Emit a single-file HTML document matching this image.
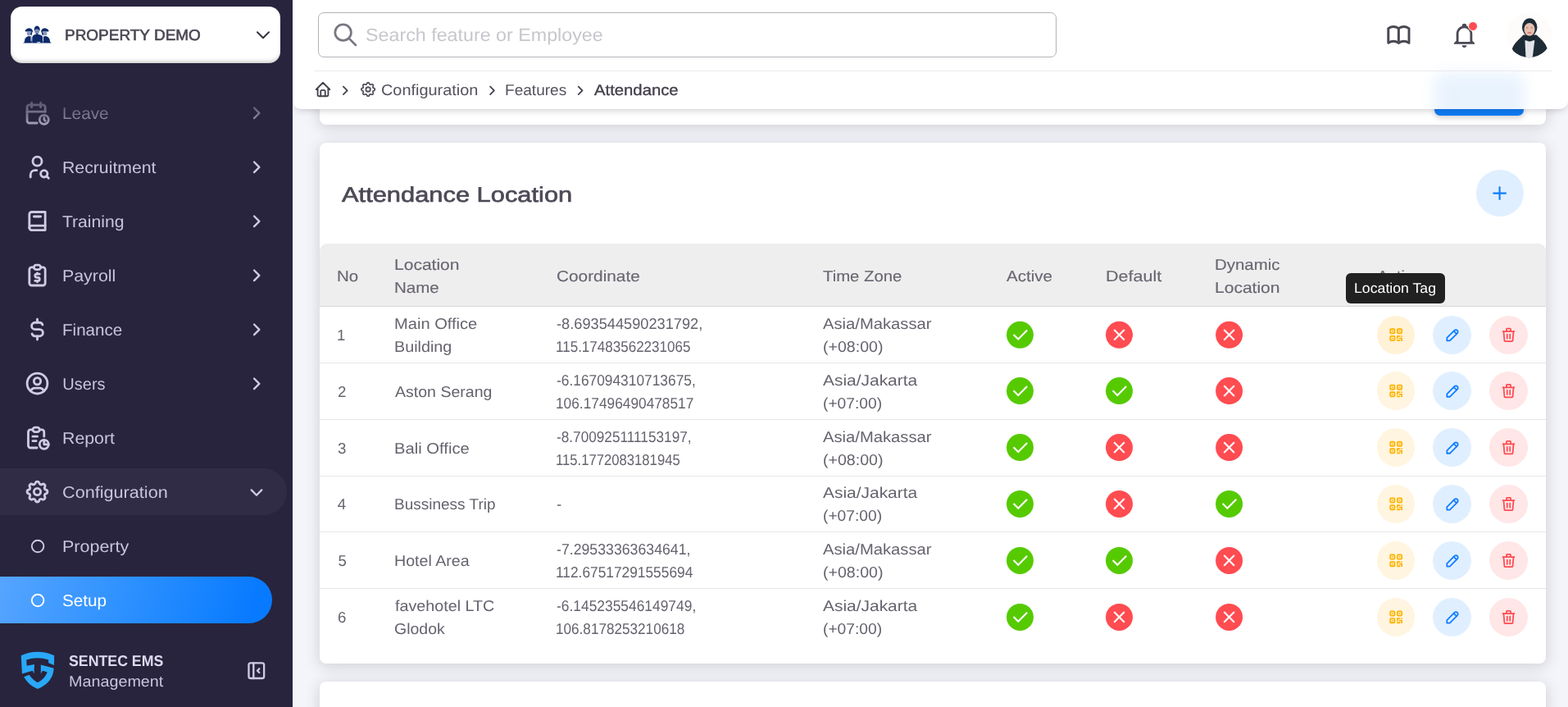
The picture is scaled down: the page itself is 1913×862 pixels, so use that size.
<!DOCTYPE html>
<html lang="en">
<head>
<meta charset="utf-8">
<title>Attendance - Configuration</title>
<style>

*{box-sizing:border-box;margin:0;padding:0}
html,body{width:1913px;height:862px}
body{position:relative;background:#f4f5fa;font-family:"Liberation Sans",sans-serif;-webkit-font-smoothing:antialiased}
#app{position:absolute;left:0;top:0;width:1913px;height:862px;overflow:hidden;will-change:transform}
.abs,.t,.ic{position:absolute}
.g{position:static;display:block;margin:0;padding:0;border:0;list-style:none;font:inherit;width:0;height:0}
.t{white-space:pre;display:block;transform-origin:0 0;text-rendering:geometricPrecision}
.ic{display:block;overflow:visible}
#sidebar{position:absolute;left:0;top:0;width:357px;height:862px;background:#28243d;overflow:hidden}
#prop{position:absolute;left:13px;top:8px;width:329px;height:68.5px;border-radius:14px;background:#fff;box-shadow:inset 0 -5px 5px -3px rgba(0,0,0,.22)}
#fade{position:absolute;left:0;top:86px;width:357px;height:84px;background:linear-gradient(#28243d 5%,rgba(40,36,61,.85) 30%,rgba(40,36,61,.5) 65%,rgba(40,36,61,.3) 75%,rgba(40,36,61,0));pointer-events:none}
#cfg{position:absolute;left:0;top:571px;width:349.5px;height:57px;border-radius:0 29px 29px 0;background:#302c45}
#setup{position:absolute;left:0;top:703px;width:332px;height:57px;border-radius:0 29px 29px 0;background:linear-gradient(-72.47deg,#087aff 8%,#2a8fff 50%,#56a5ff 100%)}
#main{position:absolute;left:357px;top:0;width:1556px;height:862px;overflow:hidden}
.card{position:absolute;left:33px;width:1496px;background:#fff;border-radius:8px;box-shadow:0 3px 17px 1px rgba(58,53,65,.19)}
#topbar{position:absolute;left:357px;top:0;width:1556px;height:133px;background:#fff;border-radius:0 0 10px 10px;box-shadow:0 4px 8px -3px rgba(58,53,65,.27);overflow:hidden}
#glow{position:absolute;left:1393px;top:89px;width:109px;height:60px;background:#0d79f2;opacity:.09;filter:blur(9px);border-radius:8px}
#search{position:absolute;left:31px;top:15px;width:901px;height:55px;border:1px solid #b4b2b9;border-radius:7px}
#divider{position:absolute;left:26px;top:86px;width:1510px;height:1px;background:#eaeaed}
#thead{position:absolute;left:0;top:123px;width:1496px;height:76.5px;background:#eee;border-radius:9px 9px 0 0;border-bottom:1px solid #d9d9dc}
.rl{position:absolute;left:0;width:1496px;height:1px;background:#e6e6e9}
.cb{position:absolute;width:47px;height:47px;border-radius:50%}
#tip{position:absolute;left:1642px;top:333px;width:121px;height:37px;border-radius:6px;background:#212121}

</style>
</head>
<body>
<div id="app">
<main id="main">
<div class="card" style="top:-40px;height:192px"></div>
<div class="abs btn-primary" style="left:1393px;top:87px;width:109px;height:54px;border-radius:7px;background:#0a7bf4;box-shadow:0 3px 6px rgba(58,53,65,.22)"></div>
<section class="card" style="top:174px;height:635px">
<div id="thead"></div>
<div class="rl" style="top:268px"></div>
<div class="rl" style="top:337px"></div>
<div class="rl" style="top:406px"></div>
<div class="rl" style="top:474px"></div>
<div class="rl" style="top:543px"></div>
</section>
<div class="card" style="top:831px;height:120px"></div>
</main>
<section class="g" aria-label="Attendance Location">
<h2 class="g"><span class="t" style="left:417.20px;top:222px;font-size:25.7px;line-height:33px;color:#4d4956;letter-spacing:0.000px;-webkit-text-stroke:0.65px #4d4956;transform:scaleX(1.2005);">Attendance Location</span></h2>
<div class="g" role="button" aria-label="Add location">
<div class="cb" style="left:1801px;top:207px;width:58px;height:57px;background:#e0efff"></div>
<svg class="ic" style="left:1817px;top:223px;width:27px;height:27px;" viewBox="0 0 27 27"><g transform="translate(0.00 0.00) scale(1.0500)" fill="none" stroke="#0d7cff" stroke-width="2" stroke-linecap="round" stroke-linejoin="round"><path d="M12 5l0 14"/><path d="M5 12l14 0"/></g></svg>
</div>
<div class="g" role="table">
<div class="g" role="row">
<div class="g" role="columnheader"><span class="t" style="left:411.10px;top:325px;font-size:18.667px;line-height:24px;color:#6a6671;letter-spacing:0.000px;-webkit-text-stroke:0.15px #6a6671;transform:scaleX(1.0965);">No</span></div>
<div class="g" role="columnheader"><span class="t" style="left:480.96px;top:311px;font-size:18.667px;line-height:24px;color:#6a6671;letter-spacing:0.000px;-webkit-text-stroke:0.15px #6a6671;transform:scaleX(1.1269);">Location</span> <span class="t" style="left:481.00px;top:339px;font-size:18.667px;line-height:24px;color:#6a6671;letter-spacing:0.000px;-webkit-text-stroke:0.15px #6a6671;transform:scaleX(1.0990);">Name</span></div>
<div class="g" role="columnheader"><span class="t" style="left:678.92px;top:325px;font-size:18.667px;line-height:24px;color:#6a6671;letter-spacing:0.000px;-webkit-text-stroke:0.15px #6a6671;transform:scaleX(1.1153);">Coordinate</span></div>
<div class="g" role="columnheader"><span class="t" style="left:1004.18px;top:325px;font-size:18.667px;line-height:24px;color:#6a6671;letter-spacing:0.000px;-webkit-text-stroke:0.15px #6a6671;transform:scaleX(1.0898);">Time Zone</span></div>
<div class="g" role="columnheader"><span class="t" style="left:1228.20px;top:325px;font-size:18.667px;line-height:24px;color:#6a6671;letter-spacing:0.000px;-webkit-text-stroke:0.15px #6a6671;transform:scaleX(1.0998);">Active</span></div>
<div class="g" role="columnheader"><span class="t" style="left:1348.52px;top:325px;font-size:18.667px;line-height:24px;color:#6a6671;letter-spacing:0.000px;-webkit-text-stroke:0.15px #6a6671;transform:scaleX(1.1529);">Default</span></div>
<div class="g" role="columnheader"><span class="t" style="left:1482.10px;top:311px;font-size:18.667px;line-height:24px;color:#6a6671;letter-spacing:0.000px;-webkit-text-stroke:0.15px #6a6671;transform:scaleX(1.0942);">Dynamic</span> <span class="t" style="left:1482.06px;top:339px;font-size:18.667px;line-height:24px;color:#6a6671;letter-spacing:0.000px;-webkit-text-stroke:0.15px #6a6671;transform:scaleX(1.1269);">Location</span></div>
<div class="g" role="columnheader"><span class="t" style="left:1679.90px;top:325px;font-size:18.667px;line-height:24px;color:#6a6671;letter-spacing:0.000px;-webkit-text-stroke:0.15px #6a6671;transform:scaleX(1.0965);">Action</span></div>
</div>
<div class="g" role="row">
<div class="g" role="cell"><span class="t" style="left:411.05px;top:397px;font-size:18.667px;line-height:24px;color:#66626d;letter-spacing:0.000px;">1</span></div>
<div class="g" role="cell"><span class="t" style="left:481.20px;top:383px;font-size:18.667px;line-height:24px;color:#66626d;letter-spacing:0.000px;transform:scaleX(1.0771);">Main Office</span> <span class="t" style="left:481.22px;top:411px;font-size:18.667px;line-height:24px;color:#66626d;letter-spacing:0.000px;transform:scaleX(1.0581);">Building</span></div>
<div class="g" role="cell"><span class="t" style="left:679.13px;top:383px;font-size:18.667px;line-height:24px;color:#66626d;letter-spacing:0.000px;transform:scaleX(0.9765);">-8.693544590231792,</span> <span class="t" style="left:678.05px;top:411px;font-size:18.667px;line-height:24px;color:#66626d;letter-spacing:0.000px;transform:scaleX(0.9126);">115.17483562231065</span></div>
<div class="g" role="cell"><span class="t" style="left:1004.30px;top:383px;font-size:18.667px;line-height:24px;color:#66626d;letter-spacing:0.000px;transform:scaleX(1.0828);">Asia/Makassar</span> <span class="t" style="left:1003.67px;top:411px;font-size:18.667px;line-height:24px;color:#66626d;letter-spacing:0.000px;transform:scaleX(1.0486);">(+08:00)</span></div>
<div class="g" role="cell"><svg class="ic" style="left:1227px;top:391px;width:36px;height:36px" viewBox="0 0 36 36"><g transform="translate(17.45 17.30)"><circle r="16.5" fill="#56ca00"/><g fill="none" stroke="#fff" stroke-width="2.1"><path d="M-7.9 -0.4L-2.2 5.3L8.7 -5.7" /></g></g></svg></div>
<div class="g" role="cell"><svg class="ic" style="left:1348px;top:391px;width:36px;height:36px" viewBox="0 0 36 36"><g transform="translate(17.50 17.30)"><circle r="16.5" fill="#ff4c51"/><g fill="none" stroke="#fff" stroke-width="2.1"><path d="M-6.3 -6.3L6.3 6.3M6.3 -6.3L-6.3 6.3" /></g></g></svg></div>
<div class="g" role="cell"><svg class="ic" style="left:1482px;top:391px;width:36px;height:36px" viewBox="0 0 36 36"><g transform="translate(17.60 17.30)"><circle r="16.5" fill="#ff4c51"/><g fill="none" stroke="#fff" stroke-width="2.1"><path d="M-6.3 -6.3L6.3 6.3M6.3 -6.3L-6.3 6.3" /></g></g></svg></div>
<div class="g" role="cell">
<div class="cb" style="left:1680px;top:384.9px;width:46.3px;background:#fff2d6"></div>
<svg class="ic" style="left:1692px;top:397px;width:23px;height:23px;" viewBox="0 0 23 23"><g transform="translate(0.75 0.75) scale(0.8708)" fill="none" stroke="#ffb400" stroke-width="2.05" stroke-linecap="round" stroke-linejoin="round"><path d="M4 4m0 1a1 1 0 0 1 1 -1h4a1 1 0 0 1 1 1v4a1 1 0 0 1 -1 1h-4a1 1 0 0 1 -1 -1z"/><path d="M7 17l0 .01"/><path d="M14 4m0 1a1 1 0 0 1 1 -1h4a1 1 0 0 1 1 1v4a1 1 0 0 1 -1 1h-4a1 1 0 0 1 -1 -1z"/><path d="M7 7l0 .01"/><path d="M4 14m0 1a1 1 0 0 1 1 -1h4a1 1 0 0 1 1 1v4a1 1 0 0 1 -1 1h-4a1 1 0 0 1 -1 -1z"/><path d="M17 7l0 .01"/><path d="M14 14l3 0"/><path d="M20 14l0 .01"/><path d="M14 14l0 3"/><path d="M14 20l3 0"/><path d="M17 17l3 0"/><path d="M20 17l0 3"/></g></svg>
<div class="cb" style="left:1748.0px;top:384.9px;background:#e0efff"></div>
<svg class="ic" style="left:1761px;top:398px;width:23px;height:23px;" viewBox="0 0 23 23"><g transform="translate(0.85 0.05) scale(0.8708)" fill="none" stroke="#0d7cff" stroke-width="2.05" stroke-linecap="round" stroke-linejoin="round"><path d="M4 20h4l10.5 -10.5a2.828 2.828 0 1 0 -4 -4l-10.5 10.5v4"/><path d="M13.5 6.5l4 4"/></g></svg>
<div class="cb" style="left:1817.0px;top:384.9px;background:#ffe6e7"></div>
<svg class="ic" style="left:1830px;top:398px;width:23px;height:23px;" viewBox="0 0 23 23"><g transform="translate(0.20 0.10) scale(0.8583)" fill="none" stroke="#ff4c51" stroke-width="2.05" stroke-linecap="round" stroke-linejoin="round"><path d="M4 7l16 0"/><path d="M10 11l0 6"/><path d="M14 11l0 6"/><path d="M5 7l1 12a2 2 0 0 0 2 2h8a2 2 0 0 0 2 -2l1 -12"/><path d="M9 7v-3a1 1 0 0 1 1 -1h4a1 1 0 0 1 1 1v3"/></g></svg>
</div>
</div>
<div class="g" role="row">
<div class="g" role="cell"><span class="t" style="left:411.92px;top:466px;font-size:18.667px;line-height:24px;color:#66626d;letter-spacing:0.000px;">2</span></div>
<div class="g" role="cell"><span class="t" style="left:481.60px;top:466px;font-size:18.667px;line-height:24px;color:#66626d;letter-spacing:0.000px;transform:scaleX(1.0470);">Aston Serang</span></div>
<div class="g" role="cell"><span class="t" style="left:679.16px;top:452px;font-size:18.667px;line-height:24px;color:#66626d;letter-spacing:0.000px;transform:scaleX(0.9296);">-6.167094310713675,</span> <span class="t" style="left:678.03px;top:480px;font-size:18.667px;line-height:24px;color:#66626d;letter-spacing:0.000px;transform:scaleX(0.9272);">106.17496490478517</span></div>
<div class="g" role="cell"><span class="t" style="left:1004.30px;top:452px;font-size:18.667px;line-height:24px;color:#66626d;letter-spacing:0.000px;transform:scaleX(1.1221);">Asia/Jakarta</span> <span class="t" style="left:1003.69px;top:480px;font-size:18.667px;line-height:24px;color:#66626d;letter-spacing:0.000px;transform:scaleX(1.0300);">(+07:00)</span></div>
<div class="g" role="cell"><svg class="ic" style="left:1227px;top:459px;width:36px;height:36px" viewBox="0 0 36 36"><g transform="translate(17.45 17.60)"><circle r="16.5" fill="#56ca00"/><g fill="none" stroke="#fff" stroke-width="2.1"><path d="M-7.9 -0.4L-2.2 5.3L8.7 -5.7" /></g></g></svg></div>
<div class="g" role="cell"><svg class="ic" style="left:1348px;top:459px;width:36px;height:36px" viewBox="0 0 36 36"><g transform="translate(17.50 17.60)"><circle r="16.5" fill="#56ca00"/><g fill="none" stroke="#fff" stroke-width="2.1"><path d="M-7.9 -0.4L-2.2 5.3L8.7 -5.7" /></g></g></svg></div>
<div class="g" role="cell"><svg class="ic" style="left:1482px;top:459px;width:36px;height:36px" viewBox="0 0 36 36"><g transform="translate(17.60 17.60)"><circle r="16.5" fill="#ff4c51"/><g fill="none" stroke="#fff" stroke-width="2.1"><path d="M-6.3 -6.3L6.3 6.3M6.3 -6.3L-6.3 6.3" /></g></g></svg></div>
<div class="g" role="cell">
<div class="cb" style="left:1680px;top:453.2px;width:46.3px;background:#fff5e0"></div>
<svg class="ic" style="left:1692px;top:466px;width:23px;height:23px;" viewBox="0 0 23 23"><g transform="translate(0.75 0.05) scale(0.8708)" fill="none" stroke="#ffb400" stroke-width="2.05" stroke-linecap="round" stroke-linejoin="round"><path d="M4 4m0 1a1 1 0 0 1 1 -1h4a1 1 0 0 1 1 1v4a1 1 0 0 1 -1 1h-4a1 1 0 0 1 -1 -1z"/><path d="M7 17l0 .01"/><path d="M14 4m0 1a1 1 0 0 1 1 -1h4a1 1 0 0 1 1 1v4a1 1 0 0 1 -1 1h-4a1 1 0 0 1 -1 -1z"/><path d="M7 7l0 .01"/><path d="M4 14m0 1a1 1 0 0 1 1 -1h4a1 1 0 0 1 1 1v4a1 1 0 0 1 -1 1h-4a1 1 0 0 1 -1 -1z"/><path d="M17 7l0 .01"/><path d="M14 14l3 0"/><path d="M20 14l0 .01"/><path d="M14 14l0 3"/><path d="M14 20l3 0"/><path d="M17 17l3 0"/><path d="M20 17l0 3"/></g></svg>
<div class="cb" style="left:1748.0px;top:453.2px;background:#e0efff"></div>
<svg class="ic" style="left:1761px;top:466px;width:23px;height:23px;" viewBox="0 0 23 23"><g transform="translate(0.85 0.35) scale(0.8708)" fill="none" stroke="#0d7cff" stroke-width="2.05" stroke-linecap="round" stroke-linejoin="round"><path d="M4 20h4l10.5 -10.5a2.828 2.828 0 1 0 -4 -4l-10.5 10.5v4"/><path d="M13.5 6.5l4 4"/></g></svg>
<div class="cb" style="left:1817.0px;top:453.2px;background:#ffe6e7"></div>
<svg class="ic" style="left:1830px;top:466px;width:23px;height:23px;" viewBox="0 0 23 23"><g transform="translate(0.20 0.40) scale(0.8583)" fill="none" stroke="#ff4c51" stroke-width="2.05" stroke-linecap="round" stroke-linejoin="round"><path d="M4 7l16 0"/><path d="M10 11l0 6"/><path d="M14 11l0 6"/><path d="M5 7l1 12a2 2 0 0 0 2 2h8a2 2 0 0 0 2 -2l1 -12"/><path d="M9 7v-3a1 1 0 0 1 1 -1h4a1 1 0 0 1 1 1v3"/></g></svg>
</div>
</div>
<div class="g" role="row">
<div class="g" role="cell"><span class="t" style="left:411.92px;top:535px;font-size:18.667px;line-height:24px;color:#66626d;letter-spacing:0.000px;">3</span></div>
<div class="g" role="cell"><span class="t" style="left:481.19px;top:535px;font-size:18.667px;line-height:24px;color:#66626d;letter-spacing:0.000px;transform:scaleX(1.0831);">Bali Office</span></div>
<div class="g" role="cell"><span class="t" style="left:679.16px;top:521px;font-size:18.667px;line-height:24px;color:#66626d;letter-spacing:0.000px;transform:scaleX(0.9222);">-8.700925111153197,</span> <span class="t" style="left:678.07px;top:549px;font-size:18.667px;line-height:24px;color:#66626d;letter-spacing:0.000px;transform:scaleX(0.8933);">115.1772083181945</span></div>
<div class="g" role="cell"><span class="t" style="left:1004.30px;top:521px;font-size:18.667px;line-height:24px;color:#66626d;letter-spacing:0.000px;transform:scaleX(1.0828);">Asia/Makassar</span> <span class="t" style="left:1003.67px;top:549px;font-size:18.667px;line-height:24px;color:#66626d;letter-spacing:0.000px;transform:scaleX(1.0486);">(+08:00)</span></div>
<div class="g" role="cell"><svg class="ic" style="left:1227px;top:528px;width:36px;height:36px" viewBox="0 0 36 36"><g transform="translate(17.45 17.60)"><circle r="16.5" fill="#56ca00"/><g fill="none" stroke="#fff" stroke-width="2.1"><path d="M-7.9 -0.4L-2.2 5.3L8.7 -5.7" /></g></g></svg></div>
<div class="g" role="cell"><svg class="ic" style="left:1348px;top:528px;width:36px;height:36px" viewBox="0 0 36 36"><g transform="translate(17.50 17.60)"><circle r="16.5" fill="#ff4c51"/><g fill="none" stroke="#fff" stroke-width="2.1"><path d="M-6.3 -6.3L6.3 6.3M6.3 -6.3L-6.3 6.3" /></g></g></svg></div>
<div class="g" role="cell"><svg class="ic" style="left:1482px;top:528px;width:36px;height:36px" viewBox="0 0 36 36"><g transform="translate(17.60 17.60)"><circle r="16.5" fill="#ff4c51"/><g fill="none" stroke="#fff" stroke-width="2.1"><path d="M-6.3 -6.3L6.3 6.3M6.3 -6.3L-6.3 6.3" /></g></g></svg></div>
<div class="g" role="cell">
<div class="cb" style="left:1680px;top:522.2px;width:46.3px;background:#fff5e0"></div>
<svg class="ic" style="left:1692px;top:535px;width:23px;height:23px;" viewBox="0 0 23 23"><g transform="translate(0.75 0.05) scale(0.8708)" fill="none" stroke="#ffb400" stroke-width="2.05" stroke-linecap="round" stroke-linejoin="round"><path d="M4 4m0 1a1 1 0 0 1 1 -1h4a1 1 0 0 1 1 1v4a1 1 0 0 1 -1 1h-4a1 1 0 0 1 -1 -1z"/><path d="M7 17l0 .01"/><path d="M14 4m0 1a1 1 0 0 1 1 -1h4a1 1 0 0 1 1 1v4a1 1 0 0 1 -1 1h-4a1 1 0 0 1 -1 -1z"/><path d="M7 7l0 .01"/><path d="M4 14m0 1a1 1 0 0 1 1 -1h4a1 1 0 0 1 1 1v4a1 1 0 0 1 -1 1h-4a1 1 0 0 1 -1 -1z"/><path d="M17 7l0 .01"/><path d="M14 14l3 0"/><path d="M20 14l0 .01"/><path d="M14 14l0 3"/><path d="M14 20l3 0"/><path d="M17 17l3 0"/><path d="M20 17l0 3"/></g></svg>
<div class="cb" style="left:1748.0px;top:522.2px;background:#e0efff"></div>
<svg class="ic" style="left:1761px;top:535px;width:23px;height:23px;" viewBox="0 0 23 23"><g transform="translate(0.85 0.35) scale(0.8708)" fill="none" stroke="#0d7cff" stroke-width="2.05" stroke-linecap="round" stroke-linejoin="round"><path d="M4 20h4l10.5 -10.5a2.828 2.828 0 1 0 -4 -4l-10.5 10.5v4"/><path d="M13.5 6.5l4 4"/></g></svg>
<div class="cb" style="left:1817.0px;top:522.2px;background:#ffe6e7"></div>
<svg class="ic" style="left:1830px;top:535px;width:23px;height:23px;" viewBox="0 0 23 23"><g transform="translate(0.20 0.40) scale(0.8583)" fill="none" stroke="#ff4c51" stroke-width="2.05" stroke-linecap="round" stroke-linejoin="round"><path d="M4 7l16 0"/><path d="M10 11l0 6"/><path d="M14 11l0 6"/><path d="M5 7l1 12a2 2 0 0 0 2 2h8a2 2 0 0 0 2 -2l1 -12"/><path d="M9 7v-3a1 1 0 0 1 1 -1h4a1 1 0 0 1 1 1v3"/></g></svg>
</div>
</div>
<div class="g" role="row">
<div class="g" role="cell"><span class="t" style="left:411.63px;top:603px;font-size:18.667px;line-height:24px;color:#66626d;letter-spacing:0.000px;">4</span></div>
<div class="g" role="cell"><span class="t" style="left:481.28px;top:603px;font-size:18.667px;line-height:24px;color:#66626d;letter-spacing:0.000px;transform:scaleX(1.0184);">Bussiness Trip</span></div>
<div class="g" role="cell"><span class="t" style="left:679.12px;top:603px;font-size:18.667px;line-height:24px;color:#66626d;letter-spacing:0.000px;">-</span></div>
<div class="g" role="cell"><span class="t" style="left:1004.30px;top:589px;font-size:18.667px;line-height:24px;color:#66626d;letter-spacing:0.000px;transform:scaleX(1.1221);">Asia/Jakarta</span> <span class="t" style="left:1003.69px;top:617px;font-size:18.667px;line-height:24px;color:#66626d;letter-spacing:0.000px;transform:scaleX(1.0300);">(+07:00)</span></div>
<div class="g" role="cell"><svg class="ic" style="left:1227px;top:597px;width:36px;height:36px" viewBox="0 0 36 36"><g transform="translate(17.45 17.40)"><circle r="16.5" fill="#56ca00"/><g fill="none" stroke="#fff" stroke-width="2.1"><path d="M-7.9 -0.4L-2.2 5.3L8.7 -5.7" /></g></g></svg></div>
<div class="g" role="cell"><svg class="ic" style="left:1348px;top:597px;width:36px;height:36px" viewBox="0 0 36 36"><g transform="translate(17.50 17.40)"><circle r="16.5" fill="#ff4c51"/><g fill="none" stroke="#fff" stroke-width="2.1"><path d="M-6.3 -6.3L6.3 6.3M6.3 -6.3L-6.3 6.3" /></g></g></svg></div>
<div class="g" role="cell"><svg class="ic" style="left:1482px;top:597px;width:36px;height:36px" viewBox="0 0 36 36"><g transform="translate(17.60 17.40)"><circle r="16.5" fill="#56ca00"/><g fill="none" stroke="#fff" stroke-width="2.1"><path d="M-7.9 -0.4L-2.2 5.3L8.7 -5.7" /></g></g></svg></div>
<div class="g" role="cell">
<div class="cb" style="left:1680px;top:591.0px;width:46.3px;background:#fff5e0"></div>
<svg class="ic" style="left:1692px;top:603px;width:23px;height:23px;" viewBox="0 0 23 23"><g transform="translate(0.75 0.85) scale(0.8708)" fill="none" stroke="#ffb400" stroke-width="2.05" stroke-linecap="round" stroke-linejoin="round"><path d="M4 4m0 1a1 1 0 0 1 1 -1h4a1 1 0 0 1 1 1v4a1 1 0 0 1 -1 1h-4a1 1 0 0 1 -1 -1z"/><path d="M7 17l0 .01"/><path d="M14 4m0 1a1 1 0 0 1 1 -1h4a1 1 0 0 1 1 1v4a1 1 0 0 1 -1 1h-4a1 1 0 0 1 -1 -1z"/><path d="M7 7l0 .01"/><path d="M4 14m0 1a1 1 0 0 1 1 -1h4a1 1 0 0 1 1 1v4a1 1 0 0 1 -1 1h-4a1 1 0 0 1 -1 -1z"/><path d="M17 7l0 .01"/><path d="M14 14l3 0"/><path d="M20 14l0 .01"/><path d="M14 14l0 3"/><path d="M14 20l3 0"/><path d="M17 17l3 0"/><path d="M20 17l0 3"/></g></svg>
<div class="cb" style="left:1748.0px;top:591.0px;background:#e0efff"></div>
<svg class="ic" style="left:1761px;top:604px;width:23px;height:23px;" viewBox="0 0 23 23"><g transform="translate(0.85 0.15) scale(0.8708)" fill="none" stroke="#0d7cff" stroke-width="2.05" stroke-linecap="round" stroke-linejoin="round"><path d="M4 20h4l10.5 -10.5a2.828 2.828 0 1 0 -4 -4l-10.5 10.5v4"/><path d="M13.5 6.5l4 4"/></g></svg>
<div class="cb" style="left:1817.0px;top:591.0px;background:#ffe6e7"></div>
<svg class="ic" style="left:1830px;top:604px;width:23px;height:23px;" viewBox="0 0 23 23"><g transform="translate(0.20 0.20) scale(0.8583)" fill="none" stroke="#ff4c51" stroke-width="2.05" stroke-linecap="round" stroke-linejoin="round"><path d="M4 7l16 0"/><path d="M10 11l0 6"/><path d="M14 11l0 6"/><path d="M5 7l1 12a2 2 0 0 0 2 2h8a2 2 0 0 0 2 -2l1 -12"/><path d="M9 7v-3a1 1 0 0 1 1 -1h4a1 1 0 0 1 1 1v3"/></g></svg>
</div>
</div>
<div class="g" role="row">
<div class="g" role="cell"><span class="t" style="left:412.51px;top:672px;font-size:18.667px;line-height:24px;color:#66626d;letter-spacing:0.000px;">5</span></div>
<div class="g" role="cell"><span class="t" style="left:481.23px;top:672px;font-size:18.667px;line-height:24px;color:#66626d;letter-spacing:0.000px;transform:scaleX(1.0525);">Hotel Area</span></div>
<div class="g" role="cell"><span class="t" style="left:679.15px;top:658px;font-size:18.667px;line-height:24px;color:#66626d;letter-spacing:0.000px;transform:scaleX(0.9493);">-7.29533363634641,</span> <span class="t" style="left:678.03px;top:686px;font-size:18.667px;line-height:24px;color:#66626d;letter-spacing:0.000px;transform:scaleX(0.9284);">112.67517291555694</span></div>
<div class="g" role="cell"><span class="t" style="left:1004.30px;top:658px;font-size:18.667px;line-height:24px;color:#66626d;letter-spacing:0.000px;transform:scaleX(1.0828);">Asia/Makassar</span> <span class="t" style="left:1003.67px;top:686px;font-size:18.667px;line-height:24px;color:#66626d;letter-spacing:0.000px;transform:scaleX(1.0486);">(+08:00)</span></div>
<div class="g" role="cell"><svg class="ic" style="left:1227px;top:666px;width:36px;height:36px" viewBox="0 0 36 36"><g transform="translate(17.45 17.40)"><circle r="16.5" fill="#56ca00"/><g fill="none" stroke="#fff" stroke-width="2.1"><path d="M-7.9 -0.4L-2.2 5.3L8.7 -5.7" /></g></g></svg></div>
<div class="g" role="cell"><svg class="ic" style="left:1348px;top:666px;width:36px;height:36px" viewBox="0 0 36 36"><g transform="translate(17.50 17.40)"><circle r="16.5" fill="#56ca00"/><g fill="none" stroke="#fff" stroke-width="2.1"><path d="M-7.9 -0.4L-2.2 5.3L8.7 -5.7" /></g></g></svg></div>
<div class="g" role="cell"><svg class="ic" style="left:1482px;top:666px;width:36px;height:36px" viewBox="0 0 36 36"><g transform="translate(17.60 17.40)"><circle r="16.5" fill="#ff4c51"/><g fill="none" stroke="#fff" stroke-width="2.1"><path d="M-6.3 -6.3L6.3 6.3M6.3 -6.3L-6.3 6.3" /></g></g></svg></div>
<div class="g" role="cell">
<div class="cb" style="left:1680px;top:660.0px;width:46.3px;background:#fff5e0"></div>
<svg class="ic" style="left:1692px;top:672px;width:23px;height:23px;" viewBox="0 0 23 23"><g transform="translate(0.75 0.85) scale(0.8708)" fill="none" stroke="#ffb400" stroke-width="2.05" stroke-linecap="round" stroke-linejoin="round"><path d="M4 4m0 1a1 1 0 0 1 1 -1h4a1 1 0 0 1 1 1v4a1 1 0 0 1 -1 1h-4a1 1 0 0 1 -1 -1z"/><path d="M7 17l0 .01"/><path d="M14 4m0 1a1 1 0 0 1 1 -1h4a1 1 0 0 1 1 1v4a1 1 0 0 1 -1 1h-4a1 1 0 0 1 -1 -1z"/><path d="M7 7l0 .01"/><path d="M4 14m0 1a1 1 0 0 1 1 -1h4a1 1 0 0 1 1 1v4a1 1 0 0 1 -1 1h-4a1 1 0 0 1 -1 -1z"/><path d="M17 7l0 .01"/><path d="M14 14l3 0"/><path d="M20 14l0 .01"/><path d="M14 14l0 3"/><path d="M14 20l3 0"/><path d="M17 17l3 0"/><path d="M20 17l0 3"/></g></svg>
<div class="cb" style="left:1748.0px;top:660.0px;background:#e0efff"></div>
<svg class="ic" style="left:1761px;top:673px;width:23px;height:23px;" viewBox="0 0 23 23"><g transform="translate(0.85 0.15) scale(0.8708)" fill="none" stroke="#0d7cff" stroke-width="2.05" stroke-linecap="round" stroke-linejoin="round"><path d="M4 20h4l10.5 -10.5a2.828 2.828 0 1 0 -4 -4l-10.5 10.5v4"/><path d="M13.5 6.5l4 4"/></g></svg>
<div class="cb" style="left:1817.0px;top:660.0px;background:#ffe6e7"></div>
<svg class="ic" style="left:1830px;top:673px;width:23px;height:23px;" viewBox="0 0 23 23"><g transform="translate(0.20 0.20) scale(0.8583)" fill="none" stroke="#ff4c51" stroke-width="2.05" stroke-linecap="round" stroke-linejoin="round"><path d="M4 7l16 0"/><path d="M10 11l0 6"/><path d="M14 11l0 6"/><path d="M5 7l1 12a2 2 0 0 0 2 2h8a2 2 0 0 0 2 -2l1 -12"/><path d="M9 7v-3a1 1 0 0 1 1 -1h4a1 1 0 0 1 1 1v3"/></g></svg>
</div>
</div>
<div class="g" role="row">
<div class="g" role="cell"><span class="t" style="left:411.92px;top:741px;font-size:18.667px;line-height:24px;color:#66626d;letter-spacing:0.000px;">6</span></div>
<div class="g" role="cell"><span class="t" style="left:481.60px;top:727px;font-size:18.667px;line-height:24px;color:#66626d;letter-spacing:0.000px;transform:scaleX(1.0568);">favehotel LTC</span> <span class="t" style="left:480.98px;top:755px;font-size:18.667px;line-height:24px;color:#66626d;letter-spacing:0.000px;transform:scaleX(1.0440);">Glodok</span></div>
<div class="g" role="cell"><span class="t" style="left:679.16px;top:727px;font-size:18.667px;line-height:24px;color:#66626d;letter-spacing:0.000px;transform:scaleX(0.9322);">-6.145235546149749,</span> <span class="t" style="left:678.04px;top:755px;font-size:18.667px;line-height:24px;color:#66626d;letter-spacing:0.000px;transform:scaleX(0.9186);">106.8178253210618</span></div>
<div class="g" role="cell"><span class="t" style="left:1004.30px;top:727px;font-size:18.667px;line-height:24px;color:#66626d;letter-spacing:0.000px;transform:scaleX(1.1221);">Asia/Jakarta</span> <span class="t" style="left:1003.69px;top:755px;font-size:18.667px;line-height:24px;color:#66626d;letter-spacing:0.000px;transform:scaleX(1.0300);">(+07:00)</span></div>
<div class="g" role="cell"><svg class="ic" style="left:1227px;top:735px;width:36px;height:36px" viewBox="0 0 36 36"><g transform="translate(17.45 17.40)"><circle r="16.5" fill="#56ca00"/><g fill="none" stroke="#fff" stroke-width="2.1"><path d="M-7.9 -0.4L-2.2 5.3L8.7 -5.7" /></g></g></svg></div>
<div class="g" role="cell"><svg class="ic" style="left:1348px;top:735px;width:36px;height:36px" viewBox="0 0 36 36"><g transform="translate(17.50 17.40)"><circle r="16.5" fill="#ff4c51"/><g fill="none" stroke="#fff" stroke-width="2.1"><path d="M-6.3 -6.3L6.3 6.3M6.3 -6.3L-6.3 6.3" /></g></g></svg></div>
<div class="g" role="cell"><svg class="ic" style="left:1482px;top:735px;width:36px;height:36px" viewBox="0 0 36 36"><g transform="translate(17.60 17.40)"><circle r="16.5" fill="#ff4c51"/><g fill="none" stroke="#fff" stroke-width="2.1"><path d="M-6.3 -6.3L6.3 6.3M6.3 -6.3L-6.3 6.3" /></g></g></svg></div>
<div class="g" role="cell">
<div class="cb" style="left:1680px;top:729.0px;width:46.3px;background:#fff5e0"></div>
<svg class="ic" style="left:1692px;top:741px;width:23px;height:23px;" viewBox="0 0 23 23"><g transform="translate(0.75 0.85) scale(0.8708)" fill="none" stroke="#ffb400" stroke-width="2.05" stroke-linecap="round" stroke-linejoin="round"><path d="M4 4m0 1a1 1 0 0 1 1 -1h4a1 1 0 0 1 1 1v4a1 1 0 0 1 -1 1h-4a1 1 0 0 1 -1 -1z"/><path d="M7 17l0 .01"/><path d="M14 4m0 1a1 1 0 0 1 1 -1h4a1 1 0 0 1 1 1v4a1 1 0 0 1 -1 1h-4a1 1 0 0 1 -1 -1z"/><path d="M7 7l0 .01"/><path d="M4 14m0 1a1 1 0 0 1 1 -1h4a1 1 0 0 1 1 1v4a1 1 0 0 1 -1 1h-4a1 1 0 0 1 -1 -1z"/><path d="M17 7l0 .01"/><path d="M14 14l3 0"/><path d="M20 14l0 .01"/><path d="M14 14l0 3"/><path d="M14 20l3 0"/><path d="M17 17l3 0"/><path d="M20 17l0 3"/></g></svg>
<div class="cb" style="left:1748.0px;top:729.0px;background:#e0efff"></div>
<svg class="ic" style="left:1761px;top:742px;width:23px;height:23px;" viewBox="0 0 23 23"><g transform="translate(0.85 0.15) scale(0.8708)" fill="none" stroke="#0d7cff" stroke-width="2.05" stroke-linecap="round" stroke-linejoin="round"><path d="M4 20h4l10.5 -10.5a2.828 2.828 0 1 0 -4 -4l-10.5 10.5v4"/><path d="M13.5 6.5l4 4"/></g></svg>
<div class="cb" style="left:1817.0px;top:729.0px;background:#ffe6e7"></div>
<svg class="ic" style="left:1830px;top:742px;width:23px;height:23px;" viewBox="0 0 23 23"><g transform="translate(0.20 0.20) scale(0.8583)" fill="none" stroke="#ff4c51" stroke-width="2.05" stroke-linecap="round" stroke-linejoin="round"><path d="M4 7l16 0"/><path d="M10 11l0 6"/><path d="M14 11l0 6"/><path d="M5 7l1 12a2 2 0 0 0 2 2h8a2 2 0 0 0 2 -2l1 -12"/><path d="M9 7v-3a1 1 0 0 1 1 -1h4a1 1 0 0 1 1 1v3"/></g></svg>
</div>
</div>
</div>
<div class="g" role="tooltip"><div id="tip"></div><span class="t" style="left:1652.12px;top:341px;font-size:17px;line-height:22px;color:#ffffff;letter-spacing:0.000px;transform:scaleX(1.0412);">Location Tag</span></div>
</section>
<header class="g">
<div id="topbar"><div id="glow"></div><div id="search"></div><div id="divider"></div></div>
<div class="g" role="search">
<svg class="ic" style="left:404px;top:25px;width:36px;height:36px;" viewBox="0 0 36 36"><g transform="translate(0.60 0.60) scale(1.4000)" fill="none" stroke="#7a7781" stroke-width="1.95" stroke-linecap="round" stroke-linejoin="round"><path d="M10 10m-7 0a7 7 0 1 0 14 0a7 7 0 1 0 -14 0"/><path d="M21 21l-6 -6"/></g></svg>
<span class="t" style="left:445.77px;top:28px;font-size:22px;line-height:29px;color:#c8c6cc;letter-spacing:0.000px;transform:scaleX(1.0576);">Search feature or Employee</span>
</div>
<div class="g" id="top-actions">
<svg class="ic" style="left:1689px;top:25px;width:36px;height:36px;" viewBox="0 0 36 36"><g transform="translate(0.60 0.80) scale(1.4000)" fill="none" stroke="#4b4753" stroke-width="2.1" stroke-linecap="round" stroke-linejoin="round"><path d="M3 6.3v12.7a8 8 0 0 1 9 0a8 8 0 0 1 9 0v-12.7a8 8 0 0 0 -9 0a8 8 0 0 0 -9 0z"/><path d="M12 6.3v12.7"/></g></svg>
<svg class="ic" style="left:1769px;top:25px;width:36px;height:36px" viewBox="0 0 36 36"><g transform="translate(0.70 0.85) scale(1.4000)" fill="#4b4753"><path d="M10 21H14A2 2 0 0 1 12 23A2 2 0 0 1 10 21M21 19V20H3V19L5 17V11C5 7.9 7.03 5.17 10 4.29C10 4.19 10 4.1 10 4A2 2 0 0 1 12 2A2 2 0 0 1 14 4C14 4.1 14 4.19 14 4.29C16.97 5.17 19 7.9 19 11V17L21 19M17 11A5 5 0 0 0 12 6A5 5 0 0 0 7 11V18H17V11Z"/></g></svg>
<div class="abs" style="left:1791px;top:26px;width:12px;height:12px;border-radius:50%;background:#ff4c51;border:1px solid #fff"></div>
<svg class="ic" style="left:1837.9px;top:14.9px;width:55.2px;height:55.2px" viewBox="0 0 55 55">
<defs><clipPath id="avc"><circle cx="27.5" cy="27.5" r="27.5"/></clipPath></defs>
<circle cx="27.5" cy="27.5" r="27.5" fill="#fefbfb"/>
<g clip-path="url(#avc)">
<path d="M20.5 27.5L13.5 34.5Q8.5 39.5 7 44L9 51L27.5 57L46 51L49.6 44Q48 39 43.8 34.5L36.4 27.5Z" fill="#1d2b36"/>
<path d="M22.4 34.2L34.2 34.2L31.6 55L23.4 55Z" fill="#e4e4e8"/>
<path d="M20 28C22 33 25 35.5 28 35.5C31 35.5 34.5 33 36.5 28Z" fill="#1a2833"/>
<ellipse cx="28.1" cy="18.2" rx="9.2" ry="11" fill="#1d2b36"/>
<ellipse cx="27.9" cy="20.8" rx="6.5" ry="7.8" fill="#e6bfae"/>
<ellipse cx="27.9" cy="25" rx="2.6" ry="1" fill="#d47a78"/>
<ellipse cx="25.2" cy="18.8" rx="1.3" ry=".7" fill="#9a7a70"/>
<ellipse cx="30.6" cy="18.8" rx="1.3" ry=".7" fill="#9a7a70"/>
</g></svg>
</div>
<nav class="g" aria-label="breadcrumb">
<svg class="ic" style="left:383px;top:98px;width:24px;height:24px;" viewBox="0 0 24 24"><g transform="translate(0.00 0.00) scale(0.9167)" fill="none" stroke="#45414d" stroke-width="2" stroke-linecap="round" stroke-linejoin="round"><path d="M5 12l-2 0l9 -9l9 9l-2 0"/><path d="M5 12v7a2 2 0 0 0 2 2h10a2 2 0 0 0 2 -2v-7"/><path d="M9 21v-6a2 2 0 0 1 2 -2h2a2 2 0 0 1 2 2v6"/></g></svg>
<svg class="ic" style="left:411px;top:100px;width:21px;height:21px;" viewBox="0 0 21 21"><g transform="translate(0.80 0.80) scale(0.7917)" fill="none" stroke="#45414d" stroke-width="2.3" stroke-linecap="round" stroke-linejoin="round"><path d="M9 6l6 6l-6 6"/></g></svg>
<svg class="ic" style="left:438px;top:98px;width:24px;height:24px;" viewBox="0 0 24 24"><g transform="translate(0.10 0.00) scale(0.9167)" fill="none" stroke="#55515d" stroke-width="2" stroke-linecap="round" stroke-linejoin="round"><path d="M10.325 4.317c.426 -1.756 2.924 -1.756 3.35 0a1.724 1.724 0 0 0 2.573 1.066c1.543 -.94 3.31 .826 2.37 2.37a1.724 1.724 0 0 0 1.065 2.572c1.756 .426 1.756 2.924 0 3.35a1.724 1.724 0 0 0 -1.066 2.573c.94 1.543 -.826 3.31 -2.37 2.37a1.724 1.724 0 0 0 -2.572 1.065c-.426 1.756 -2.924 1.756 -3.35 0a1.724 1.724 0 0 0 -2.573 -1.066c-1.543 .94 -3.31 -.826 -2.37 -2.37a1.724 1.724 0 0 0 -1.065 -2.572c-1.756 -.426 -1.756 -2.924 0 -3.35a1.724 1.724 0 0 0 1.066 -2.573c-.94 -1.543 .826 -3.31 2.37 -2.37c1 .608 2.296 .07 2.572 -1.065z"/><path d="M9 12a3 3 0 1 0 6 0a3 3 0 0 0 -6 0"/></g></svg>
<span class="t" style="left:465.27px;top:98px;font-size:18.667px;line-height:24px;color:#55515d;letter-spacing:0.000px;transform:scaleX(1.0668);">Configuration</span>
<svg class="ic" style="left:591px;top:100px;width:21px;height:21px;" viewBox="0 0 21 21"><g transform="translate(0.00 0.80) scale(0.7917)" fill="none" stroke="#45414d" stroke-width="2.3" stroke-linecap="round" stroke-linejoin="round"><path d="M9 6l6 6l-6 6"/></g></svg>
<span class="t" style="left:616.41px;top:98px;font-size:18.667px;line-height:24px;color:#55515d;letter-spacing:0.000px;transform:scaleX(1.0220);">Features</span>
<svg class="ic" style="left:698px;top:100px;width:21px;height:21px;" viewBox="0 0 21 21"><g transform="translate(0.60 0.80) scale(0.7917)" fill="none" stroke="#45414d" stroke-width="2.3" stroke-linecap="round" stroke-linejoin="round"><path d="M9 6l6 6l-6 6"/></g></svg>
<span class="t" style="left:725.30px;top:98px;font-size:18.667px;line-height:24px;color:#433f4b;letter-spacing:0.000px;-webkit-text-stroke:0.35px #433f4b;transform:scaleX(1.0875);">Attendance</span>
</nav>
</header>
<aside id="sidebar">
<div id="cfg"></div><div id="setup"></div>
<nav class="g"><ul class="g">
<li class="g">
<svg class="ic" style="left:28px;top:121px;width:35px;height:35px;" viewBox="0 0 35 35"><g transform="translate(0.95 0.00) scale(1.3792)" fill="none" stroke="#cfcbe4" stroke-width="2.05" stroke-linecap="round" stroke-linejoin="round"><path d="M11.795 21h-6.795a2 2 0 0 1 -2 -2v-12a2 2 0 0 1 2 -2h12a2 2 0 0 1 2 2v4"/><path d="M18 18m-4 0a4 4 0 1 0 8 0a4 4 0 1 0 -8 0"/><path d="M15 3v4"/><path d="M7 3v4"/><path d="M3 11h16"/><path d="M18 16.496v1.504l1 1"/></g></svg>
<span class="t" style="left:75.98px;top:126px;font-size:20px;line-height:26px;color:#c8c4dd;letter-spacing:0.000px;transform:scaleX(1.0396);">Leave</span>
<svg class="ic" style="left:300px;top:125px;width:27px;height:27px;" viewBox="0 0 27 27"><g transform="translate(0.60 0.20) scale(1.0500)" fill="none" stroke="#cfcbe4" stroke-width="2.25" stroke-linecap="round" stroke-linejoin="round"><path d="M9 6l6 6l-6 6"/></g></svg>
</li>
<li class="g">
<svg class="ic" style="left:28px;top:187px;width:35px;height:35px;" viewBox="0 0 35 35"><g transform="translate(0.95 0.00) scale(1.3792)" fill="none" stroke="#cfcbe4" stroke-width="2.05" stroke-linecap="round" stroke-linejoin="round"><path d="M8 7a4 4 0 1 0 8 0a4 4 0 0 0 -8 0"/><path d="M6 21v-2a4 4 0 0 1 4 -4h1.5"/><path d="M18 18m-3 0a3 3 0 1 0 6 0a3 3 0 1 0 -6 0"/><path d="M20.2 20.2l1.8 1.8"/></g></svg>
<span class="t" style="left:75.94px;top:192px;font-size:20px;line-height:26px;color:#c8c4dd;letter-spacing:0.000px;transform:scaleX(1.0621);">Recruitment</span>
<svg class="ic" style="left:300px;top:191px;width:27px;height:27px;" viewBox="0 0 27 27"><g transform="translate(0.60 0.20) scale(1.0500)" fill="none" stroke="#cfcbe4" stroke-width="2.25" stroke-linecap="round" stroke-linejoin="round"><path d="M9 6l6 6l-6 6"/></g></svg>
</li>
<li class="g">
<svg class="ic" style="left:28px;top:253px;width:35px;height:35px;" viewBox="0 0 35 35"><g transform="translate(0.95 0.00) scale(1.3792)" fill="none" stroke="#cfcbe4" stroke-width="2.05" stroke-linecap="round" stroke-linejoin="round"><path d="M19 4v16h-12a2 2 0 0 1 -2 -2v-12a2 2 0 0 1 2 -2h12z"/><path d="M19 16h-12a2 2 0 0 0 -2 2"/><path d="M9 8h6"/></g></svg>
<span class="t" style="left:76.33px;top:258px;font-size:20px;line-height:26px;color:#c8c4dd;letter-spacing:0.000px;transform:scaleX(1.0546);">Training</span>
<svg class="ic" style="left:300px;top:257px;width:27px;height:27px;" viewBox="0 0 27 27"><g transform="translate(0.60 0.20) scale(1.0500)" fill="none" stroke="#cfcbe4" stroke-width="2.25" stroke-linecap="round" stroke-linejoin="round"><path d="M9 6l6 6l-6 6"/></g></svg>
</li>
<li class="g">
<svg class="ic" style="left:28px;top:319px;width:35px;height:35px;" viewBox="0 0 35 35"><g transform="translate(0.95 0.00) scale(1.3792)" fill="none" stroke="#cfcbe4" stroke-width="2.05" stroke-linecap="round" stroke-linejoin="round"><path d="M9 5h-2a2 2 0 0 0 -2 2v12a2 2 0 0 0 2 2h10a2 2 0 0 0 2 -2v-12a2 2 0 0 0 -2 -2h-2"/><path d="M9 3m0 2a2 2 0 0 1 2 -2h2a2 2 0 0 1 2 2v0a2 2 0 0 1 -2 2h-2a2 2 0 0 1 -2 -2z"/><path d="M14 11h-2.5a1.5 1.5 0 0 0 0 3h1a1.5 1.5 0 0 1 0 3h-2.5"/><path d="M12 17v1m0 -8v1"/></g></svg>
<span class="t" style="left:75.93px;top:324px;font-size:20px;line-height:26px;color:#c8c4dd;letter-spacing:0.000px;transform:scaleX(1.0677);">Payroll</span>
<svg class="ic" style="left:300px;top:323px;width:27px;height:27px;" viewBox="0 0 27 27"><g transform="translate(0.60 0.20) scale(1.0500)" fill="none" stroke="#cfcbe4" stroke-width="2.25" stroke-linecap="round" stroke-linejoin="round"><path d="M9 6l6 6l-6 6"/></g></svg>
</li>
<li class="g">
<svg class="ic" style="left:28px;top:385px;width:35px;height:35px;" viewBox="0 0 35 35"><g transform="translate(0.95 0.00) scale(1.3792)" fill="none" stroke="#cfcbe4" stroke-width="2.05" stroke-linecap="round" stroke-linejoin="round"><path d="M16.7 8a3 3 0 0 0 -2.7 -2h-4a3 3 0 0 0 0 6h4a3 3 0 0 1 0 6h-4a3 3 0 0 1 -2.7 -2"/><path d="M12 3v3m0 12v3"/></g></svg>
<span class="t" style="left:75.99px;top:390px;font-size:20px;line-height:26px;color:#c8c4dd;letter-spacing:0.000px;transform:scaleX(1.0294);">Finance</span>
<svg class="ic" style="left:300px;top:389px;width:27px;height:27px;" viewBox="0 0 27 27"><g transform="translate(0.60 0.20) scale(1.0500)" fill="none" stroke="#cfcbe4" stroke-width="2.25" stroke-linecap="round" stroke-linejoin="round"><path d="M9 6l6 6l-6 6"/></g></svg>
</li>
<li class="g">
<svg class="ic" style="left:28px;top:451px;width:35px;height:35px;" viewBox="0 0 35 35"><g transform="translate(0.95 0.00) scale(1.3792)" fill="none" stroke="#cfcbe4" stroke-width="2.05" stroke-linecap="round" stroke-linejoin="round"><path d="M12 12m-9 0a9 9 0 1 0 18 0a9 9 0 1 0 -18 0"/><path d="M12 10m-3 0a3 3 0 1 0 6 0a3 3 0 1 0 -6 0"/><path d="M6.168 18.849a4 4 0 0 1 3.832 -2.849h4a4 4 0 0 1 3.834 2.855"/></g></svg>
<span class="t" style="left:76.35px;top:456px;font-size:20px;line-height:26px;color:#c8c4dd;letter-spacing:0.000px;">Users</span>
<svg class="ic" style="left:300px;top:455px;width:27px;height:27px;" viewBox="0 0 27 27"><g transform="translate(0.60 0.20) scale(1.0500)" fill="none" stroke="#cfcbe4" stroke-width="2.25" stroke-linecap="round" stroke-linejoin="round"><path d="M9 6l6 6l-6 6"/></g></svg>
</li>
<li class="g">
<svg class="ic" style="left:28px;top:517px;width:35px;height:35px;" viewBox="0 0 35 35"><g transform="translate(0.95 0.00) scale(1.3792)" fill="none" stroke="#cfcbe4" stroke-width="2.05" stroke-linecap="round" stroke-linejoin="round"><path d="M8 5h-2a2 2 0 0 0 -2 2v12a2 2 0 0 0 2 2h5.697"/><path d="M18 14v4h4"/><path d="M18 11v-4a2 2 0 0 0 -2 -2h-2"/><path d="M8 3m0 2a2 2 0 0 1 2 -2h2a2 2 0 0 1 2 2v0a2 2 0 0 1 -2 2h-2a2 2 0 0 1 -2 -2z"/><path d="M18 18m-4 0a4 4 0 1 0 8 0a4 4 0 1 0 -8 0"/><path d="M8 11h4"/><path d="M8 15h3"/></g></svg>
<span class="t" style="left:75.93px;top:522px;font-size:20px;line-height:26px;color:#c8c4dd;letter-spacing:0.000px;transform:scaleX(1.0660);">Report</span>
</li>
<li class="g">
<svg class="ic" style="left:28px;top:583px;width:35px;height:35px;" viewBox="0 0 35 35"><g transform="translate(0.95 0.00) scale(1.3792)" fill="none" stroke="#cfcbe4" stroke-width="2.05" stroke-linecap="round" stroke-linejoin="round"><path d="M10.325 4.317c.426 -1.756 2.924 -1.756 3.35 0a1.724 1.724 0 0 0 2.573 1.066c1.543 -.94 3.31 .826 2.37 2.37a1.724 1.724 0 0 0 1.065 2.572c1.756 .426 1.756 2.924 0 3.35a1.724 1.724 0 0 0 -1.066 2.573c.94 1.543 -.826 3.31 -2.37 2.37a1.724 1.724 0 0 0 -2.572 1.065c-.426 1.756 -2.924 1.756 -3.35 0a1.724 1.724 0 0 0 -2.573 -1.066c-1.543 .94 -3.31 -.826 -2.37 -2.37a1.724 1.724 0 0 0 -1.065 -2.572c-1.756 -.426 -1.756 -2.924 0 -3.35a1.724 1.724 0 0 0 1.066 -2.573c-.94 -1.543 .826 -3.31 2.37 -2.37c1 .608 2.296 .07 2.572 -1.065z"/><path d="M9 12a3 3 0 1 0 6 0a3 3 0 0 0 -6 0"/></g></svg>
<span class="t" style="left:75.65px;top:588px;font-size:20px;line-height:26px;color:#c8c4dd;letter-spacing:0.000px;transform:scaleX(1.0821);">Configuration</span>
<svg class="ic" style="left:300px;top:588px;width:27px;height:27px;" viewBox="0 0 27 27"><g transform="translate(0.40 0.00) scale(1.0500)" fill="none" stroke="#cfcbe4" stroke-width="2.25" stroke-linecap="round" stroke-linejoin="round"><path d="M6 9l6 6l6 -6"/></g></svg>
</li>
<li class="g">
<svg class="ic" style="left:36px;top:656px;width:20px;height:20px" viewBox="0 0 20 20"><circle cx="10.1" cy="10.05" r="7.25" fill="none" stroke="#cfcbe4" stroke-width="1.9"/></svg>
<span class="t" style="left:75.92px;top:654px;font-size:20px;line-height:26px;color:#c8c4dd;letter-spacing:0.000px;transform:scaleX(1.0747);">Property</span>
</li>
<li class="g">
<svg class="ic" style="left:36px;top:722px;width:20px;height:20px" viewBox="0 0 20 20"><circle cx="10.1" cy="10.05" r="7.25" fill="none" stroke="#ffffff" stroke-width="1.9"/></svg>
<span class="t" style="left:76.02px;top:720px;font-size:20px;line-height:26px;color:#ffffff;letter-spacing:0.000px;transform:scaleX(1.0356);">Setup</span>
</li>
</ul></nav>
<div id="fade"></div>
<div class="abs" style="left:0;top:0;width:357px;height:86px;background:#28243d"></div>
<div class="g" id="property-switcher">
<div id="prop"></div>
<svg class="ic" style="left:28.3px;top:31.3px;width:34.6px;height:21.6px" viewBox="180 200 745 466" preserveAspectRatio="none">
<g fill="#0c2a6b">
<path d="M215 665L230 560Q250 500 320 478L400 490L415 665Z"/>
<path d="M420 665L425 500Q440 450 500 435L600 435Q680 450 700 500L705 665Z"/>
<path d="M710 665L715 490L790 478Q860 500 880 560L900 665Z"/>
<path d="M185 665L215 630L215 665Z"/><path d="M925 665L895 630L895 665Z"/>
<path d="M235 350Q250 280 345 268Q430 280 440 360L425 385L395 360L250 362Z"/>
<path d="M860 350Q845 280 750 268Q665 280 655 360L670 385L700 360L845 362Z"/>
<path d="M475 330Q470 225 548 212Q632 225 625 330L610 360Q600 300 548 300Q495 300 488 360Z"/>
</g>
<g fill="#8d9bbd">
<ellipse cx="335" cy="410" rx="55" ry="55"/>
<ellipse cx="760" cy="410" rx="55" ry="55"/>
<ellipse cx="548" cy="365" rx="58" ry="70"/>
</g>
<g fill="#0c2a6b">
<path d="M395 360L425 385L405 470L375 440Z"/>
<path d="M700 360L670 385L690 470L720 440Z"/>
<path d="M505 350L535 345L535 360L505 362Z"/><path d="M562 345L592 350L592 362L562 360Z"/>
<path d="M520 405L578 405L560 440L538 440Z"/>
</g>
<g fill="#ffffff">
<path d="M385 500L400 500L400 610L385 610Z"/><path d="M700 500L715 500L715 610L700 610Z"/>
<path d="M540 640L620 625L650 660L545 662Z" opacity=".8"/>
</g>
</svg>
<span class="t" style="left:79.12px;top:31px;font-size:18.7px;line-height:24px;color:#4b4753;letter-spacing:0.000px;-webkit-text-stroke:0.6px #4b4753;transform:scaleX(1.0152);">PROPERTY DEMO</span>
<svg class="ic" style="left:307px;top:28px;width:30px;height:30px;" viewBox="0 0 30 30"><g transform="translate(0.00 0.85) scale(1.1667)" fill="none" stroke="#3a3541" stroke-width="1.8" stroke-linecap="round" stroke-linejoin="round"><path d="M6 9l6 6l6 -6"/></g></svg>
</div>
<footer class="g">
<div class="abs" style="left:0;top:776px;width:357px;height:86px;background:#28243d"></div>
<svg class="ic" style="left:16px;top:786px;width:60px;height:62px" viewBox="0 0 834 862">
<g fill="#29a8f7">
<path d="M135 185Q415 60 697 185L695 348L600 310L600 257Q415 195 225 257L232 357L360 335L355 492L330 440L152 492Z"/>
<path d="M470 340L690 400Q680 640 415 752Q260 690 183 547L275 512Q330 600 415 642Q540 580 580 466L500 440L470 492Z"/>
</g></svg>
<span class="t" style="left:84.22px;top:794px;font-size:18.6px;line-height:24px;color:#dedaf0;letter-spacing:0.000px;font-weight:700;transform:scaleX(0.9539);">SENTEC EMS</span>
<span class="t" style="left:83.96px;top:819px;font-size:18.667px;line-height:24px;color:#c8c4dd;letter-spacing:0.000px;transform:scaleX(1.0589);">Management</span>
<svg class="ic" style="left:298px;top:803px;width:30px;height:30px;" viewBox="0 0 30 30"><g transform="translate(0.80 0.70) scale(1.1667)" fill="none" stroke="#cfcbe4" stroke-width="2" stroke-linecap="round" stroke-linejoin="round"><path d="M4 4m0 2a2 2 0 0 1 2 -2h12a2 2 0 0 1 2 2v12a2 2 0 0 1 -2 2h-12a2 2 0 0 1 -2 -2z"/><path d="M9 4v16"/><path d="M15 10l-2 2l2 2"/></g></svg>
</footer>
</aside>
</div>
</body>
</html>
